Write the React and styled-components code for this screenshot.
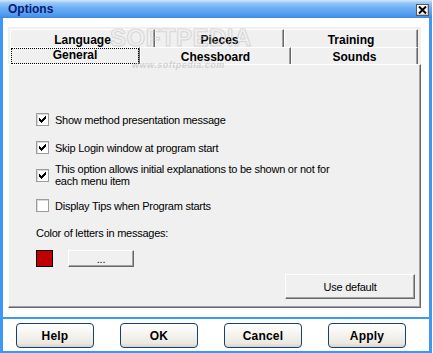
import React from "react";
import styled, { createGlobalStyle } from "styled-components";

const GlobalStyle = createGlobalStyle`
  html, body {
    margin: 0;
    padding: 0;
    background: #ffffff;
  }
  body {
    font-family: "Liberation Sans", Arial, sans-serif;
    color: #000;
  }
`;

const blue = "#3d97f5";

const Window = styled.div`
  position: relative;
  width: 432px;
  height: 353px;
  display: flex;
  flex-direction: column;
  background: #fff;
`;

const TitleBar = styled.div`
  height: 18px;
  flex: none;
  display: flex;
  align-items: center;
  justify-content: space-between;
  padding: 0 3px 0 8px;
  background: linear-gradient(
    to bottom,
    #d2e6fb 0%,
    #93c4f6 18%,
    #6aaef2 45%,
    #5aa3f0 70%,
    #4a95ec 88%,
    #3b86e2 100%
  );
`;

const Title = styled.span`
  font-size: 12px;
  font-weight: bold;
  color: #0a1a78;
`;

const CloseBox = styled.div`
  box-sizing: border-box;
  width: 13px;
  height: 12px;
  margin-top: 1px;
  display: flex;
  align-items: center;
  justify-content: center;
  background: #fff;
  border: 1px solid #5b5b5b;
  box-shadow: inset -1px -1px #c8c8c8;
`;

const Client = styled.div`
  flex: 1;
  display: flex;
  flex-direction: column;
  border-left: 3px solid ${blue};
  border-right: 3px solid ${blue};
  border-bottom: 2px solid ${blue};
`;

const TabControl = styled.div`
  margin: 9px 8px 0 5px;
  background: #f0f0f0;
  padding-top: 2px;
  display: flex;
  flex-direction: column;
`;

const TabRow = styled.div`
  display: flex;
  padding-left: 2px;
  height: ${(p) => p.$h}px;
`;

const Tab = styled.div`
  box-sizing: border-box;
  width: ${(p) => p.$w}px;
  height: 100%;
  display: flex;
  align-items: center;
  justify-content: center;
  background: #f0f0f0;
  border-top: 1px solid #ffffff;
  border-left: 1px solid #ffffff;
  border-right: 1px solid #696969;
  box-shadow: inset -1px 0 #a0a0a0;
  font-size: 12px;
  font-weight: bold;
  padding-top: ${(p) => (p.$selected ? 0 : 2)}px;
`;

const Focus = styled.span`
  box-sizing: border-box;
  align-self: stretch;
  flex: 1;
  display: flex;
  align-items: center;
  justify-content: center;
  border: 1px dotted #000;
  padding-bottom: 2px;
`;

const Panel = styled.div`
  box-sizing: border-box;
  height: 244px;
  display: flex;
  flex-direction: column;
  padding: 0 5px 0 27px;
  border-left: 1px solid #ffffff;
  border-top: 1px solid #ffffff;
  border-right: 1px solid #696969;
  border-bottom: 1px solid #696969;
  box-shadow: inset -1px -1px #a0a0a0;
  font-size: 11px;
  letter-spacing: -0.25px;
`;

const OptionRow = styled.label`
  display: flex;
  align-items: center;
  gap: 6px;
  margin-top: ${(p) => p.$mt}px;
  line-height: 12px;
  min-height: 13px;
`;

const Box = styled.span`
  box-sizing: border-box;
  flex: none;
  width: 13px;
  height: 13px;
  background: #fff;
  border: 1px solid #9c9c9c;
  box-shadow: inset 1px 1px #dadada;
  display: flex;
  align-items: center;
  justify-content: center;
`;

const Label = styled.div`
  margin-top: ${(p) => p.$mt}px;
  line-height: 13px;
`;

const ColorRow = styled.div`
  display: flex;
  align-items: center;
  gap: 15px;
  margin-top: 10px;
  height: 17px;
`;

const Swatch = styled.span`
  box-sizing: border-box;
  width: 17px;
  height: 17px;
  background: ${(p) => p.$color};
  border: 1px solid #000;
`;

const ClassicButton = styled.div`
  box-sizing: border-box;
  width: ${(p) => p.$w}px;
  height: ${(p) => p.$h}px;
  display: flex;
  align-items: center;
  justify-content: center;
  background: #f0f0f0;
  border: 1px solid;
  border-color: #ffffff #696969 #696969 #ffffff;
  box-shadow: inset -1px -1px #a0a0a0;
  font-size: 11px;
`;

const DefaultRow = styled.div`
  display: flex;
  justify-content: flex-end;
  margin-top: 7px;
`;

const Separator = styled.div`
  height: 2px;
  margin-top: 9px;
  background: ${blue};
`;

const ButtonBar = styled.div`
  flex: 1;
  display: flex;
  align-items: flex-start;
  gap: 26px;
  padding: 4px 0 0 13px;
`;

const XPButton = styled.div`
  box-sizing: border-box;
  width: 78px;
  height: 25px;
  display: flex;
  align-items: center;
  justify-content: center;
  border: 1px solid #1b3e6f;
  border-radius: 4px;
  background: linear-gradient(to bottom, #ffffff 0%, #f6f5f1 40%, #ebe8e1 85%, #d9d4ca 100%);
  font-size: 12px;
  font-weight: bold;
  letter-spacing: 0.2px;
`;

const Watermark = styled.div`
  position: absolute;
  left: ${(p) => p.$x}px;
  top: ${(p) => p.$y}px;
  font-size: ${(p) => p.$size}px;
  font-style: ${(p) => (p.$italic ? "italic" : "normal")};
  font-weight: bold;
  color: ${(p) => (p.$stroke ? "transparent" : "rgba(175,175,175,0.5)")};
  -webkit-text-stroke: ${(p) => (p.$stroke ? "1px rgba(190,190,190,0.55)" : "0")};
  pointer-events: none;
  letter-spacing: 0.5px;
`;

const Check = () => (
  <svg width="9" height="9" viewBox="0 0 9 9" shapeRendering="crispEdges">
    <path d="M1 3h1v1h1v1h1V4h1V3h1V2h1V1h1v3H7v1H6v1H5v1H4v1H3V7H2V6H1z" fill="#000" />
  </svg>
);

const Option = ({ checked, mt, children }) => (
  <OptionRow $mt={mt}>
    <Box>{checked && <Check />}</Box>
    <span>{children}</span>
  </OptionRow>
);

export default function App() {
  return (
    <>
      <GlobalStyle />
      <Window>
        <TitleBar>
          <Title>Options</Title>
          <CloseBox>
            <svg width="9" height="8" viewBox="0 0 9 8">
              <path d="M1 0.5l7 7M8 0.5l-7 7" stroke="#000" strokeWidth="2" />
            </svg>
          </CloseBox>
        </TitleBar>
        <Client>
          <TabControl>
            <TabRow $h={18}>
              <Tab $w={145}>Language</Tab>
              <Tab $w={129}>Pieces</Tab>
              <Tab $w={134}>Training</Tab>
            </TabRow>
            <TabRow $h={17}>
              <Tab $w={130} $selected>
                <Focus>General</Focus>
              </Tab>
              <Tab $w={151}>Chessboard</Tab>
              <Tab $w={127}>Sounds</Tab>
            </TabRow>
            <Panel>
              <Option checked mt={48}>Show method presentation message</Option>
              <Option checked mt={15}>Skip Login window at program start</Option>
              <Option checked mt={9}>
                This option allows initial explanations to be shown or not for
                <br />
                each menu item
              </Option>
              <Option mt={12}>Display Tips when Program starts</Option>
              <Label $mt={15}>Color of letters in messages:</Label>
              <ColorRow>
                <Swatch $color="#c00000" />
                <ClassicButton $w={66} $h={17}>...</ClassicButton>
              </ColorRow>
              <DefaultRow>
                <ClassicButton $w={130} $h={25}>Use default</ClassicButton>
              </DefaultRow>
            </Panel>
          </TabControl>
          <Separator />
          <ButtonBar>
            <XPButton>Help</XPButton>
            <XPButton>OK</XPButton>
            <XPButton>Cancel</XPButton>
            <XPButton>Apply</XPButton>
          </ButtonBar>
        </Client>
        <Watermark $x={110} $y={24} $size={24} $stroke>
          SOFTPEDIA
        </Watermark>
        <Watermark $x={132} $y={60} $size={9} $italic>
          www.softpedia.com
        </Watermark>
      </Window>
    </>
  );
}
